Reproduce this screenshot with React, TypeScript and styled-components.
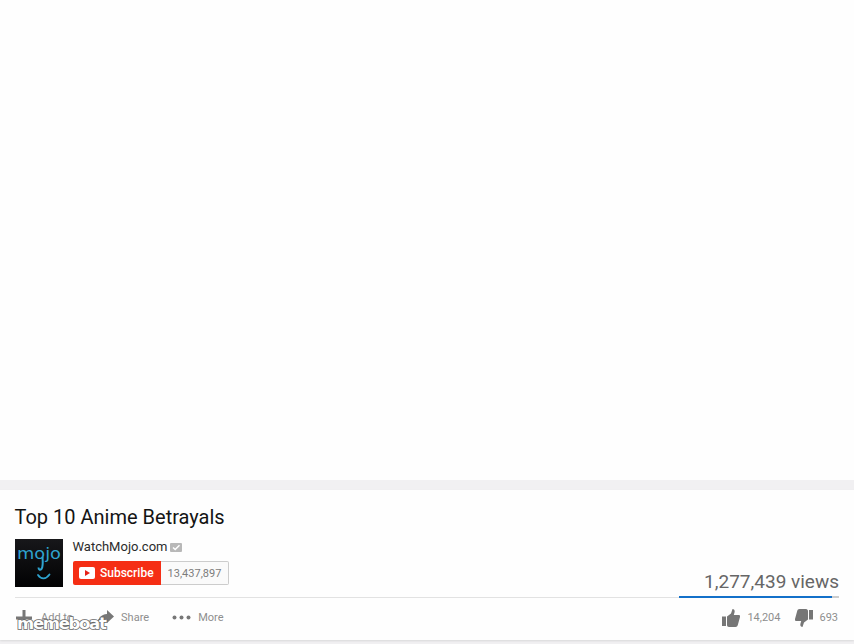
import styled, { createGlobalStyle } from "styled-components";

const GlobalStyle = createGlobalStyle`
  html, body {
    margin: 0;
    padding: 0;
    background: #f1f0f2;
    font-family: Roboto, "Liberation Sans", sans-serif;
  }
`;

const Page = styled.div`
  position: relative;
  width: 854px;
  height: 644px;
  overflow: hidden;
  display: flex;
  flex-direction: column;
  background: #f1f0f2;
`;

const Player = styled.div`
  height: 480px;
  background: #fefefe;
  margin-bottom: 10px;
`;

const Card = styled.section`
  height: 150px;
  box-sizing: border-box;
  padding: 15px 15px 0;
  background: #fefefe;
  box-shadow: 0 1px 2px rgba(0, 0, 0, 0.1);
  display: flex;
  flex-direction: column;
`;

const Title = styled.h1`
  margin: 0 0 0 -0.5px;
  font-size: 20px;
  line-height: 25px;
  font-weight: 400;
  color: #141414;
`;

const Header = styled.div`
  display: flex;
  justify-content: space-between;
  align-items: flex-end;
  margin-top: 9px;
  height: 59px;
  box-sizing: border-box;
  padding-bottom: 10px;
  border-bottom: 1px solid #e2e2e2;
  position: relative;
`;

const Channel = styled.div`
  display: flex;
  gap: 10px;
`;

const Avatar = styled.svg`
  display: block;
  width: 48px;
  height: 48px;
`;

const ChannelInfo = styled.div`
  display: flex;
  flex-direction: column;
  gap: 6px;
`;

const ChannelName = styled.div`
  display: flex;
  align-items: center;
  gap: 3px;
  margin-left: -0.5px;
  font-size: 13px;
  line-height: 16px;
  color: #2b2b2b;
`;

const Subscribe = styled.div`
  display: flex;
  height: 24px;
`;

const SubscribeButton = styled.div`
  width: 88px;
  display: flex;
  align-items: center;
  gap: 5px;
  box-sizing: border-box;
  padding-left: 6px;
  background: #f52e14;
  border-radius: 2px 0 0 2px;
  color: #fff;
  font-size: 12px;
  font-weight: 500;
`;

const SubscriberCount = styled.div`
  width: 68px;
  box-sizing: border-box;
  display: flex;
  align-items: center;
  justify-content: center;
  border: 1px solid #ccc;
  border-left: 0;
  border-radius: 0 2px 2px 0;
  background: #fafafa;
  color: #7c7c7c;
  font-size: 11px;
`;

const Views = styled.div`
  font-size: 19px;
  line-height: 22px;
  color: #666;
  margin-bottom: -6px;
`;

const SentimentBar = styled.div`
  position: absolute;
  right: 0;
  bottom: -1px;
  width: 160px;
  height: 2px;
  background: #ccc;
`;

const SentimentFill = styled.div`
  height: 100%;
  background: #1370c9;
`;

const Actions = styled.div`
  flex: 1;
  display: flex;
  justify-content: space-between;
  align-items: center;
  padding-bottom: 3px;
`;

const ActionGroup = styled.div<{ $gap: number }>`
  display: flex;
  align-items: center;
  gap: ${(p) => p.$gap}px;
`;

const RatingGroup = styled(ActionGroup)`
  padding-right: 1px;
`;

const Action = styled.div<{ $gap: number }>`
  display: flex;
  align-items: center;
  gap: ${(p) => p.$gap}px;
  font-size: 11px;
  color: #8e8e8e;
`;

const Watermark = styled.div`
  position: absolute;
  left: 17px;
  top: 615px;
  font-family: "DejaVu Sans", sans-serif;
  font-size: 16.5px;
  line-height: 18px;
  font-weight: 700;
  letter-spacing: -1.3px;
  color: #fff;
  -webkit-text-stroke: 1.6px #666;
  paint-order: stroke fill;
  opacity: 0.98;
`;

function MojoLogo() {
  return (
    <Avatar viewBox="0 0 48 48">
      <defs>
        <linearGradient id="mojoBg" x1="0" y1="0" x2="0" y2="1">
          <stop offset="0" stopColor="#17171a" />
          <stop offset="1" stopColor="#020203" />
        </linearGradient>
      </defs>
      <rect width="48" height="48" fill="url(#mojoBg)" />
      <text
        x="2"
        y="20"
        fill="#2ea3cf"
        fontFamily="'DejaVu Sans', sans-serif"
        fontSize="15"
        textLength="44"
        lengthAdjust="spacingAndGlyphs"
      >
        mojo
      </text>
      <path d="M27.500 18 C28 24 28 28 26.500 30 C25 31.500 23.500 30.500 23.500 28.500" stroke="#2ea3cf" strokeWidth="2" fill="none" />
      <path d="M23 36 C26 40.500 31 40.500 34.500 35.500" stroke="#2ea3cf" strokeWidth="1.800" fill="none" strokeLinecap="round" />
    </Avatar>
  );
}

function Verified() {
  return (
    <svg width="12" height="9" viewBox="0 0 12 9">
      <rect width="12" height="9" rx="1" fill="#b8b8b8" />
      <path d="M3 4.500 L5.200 6.500 L9.500 2.300" stroke="#fff" strokeWidth="1.500" fill="none" />
    </svg>
  );
}

function YoutubeMark() {
  return (
    <svg width="16" height="12" viewBox="0 0 16 12">
      <rect width="16" height="12" rx="2" fill="#fff" />
      <path d="M6 3 L11 6 L6 9 Z" fill="#e62117" />
    </svg>
  );
}

function PlusIcon() {
  return (
    <svg width="18" height="18" viewBox="0 0 18 18">
      <path d="M7.500 1 H10.500 V7.500 H17 V10.500 H10.500 V17 H7.500 V10.500 H1 V7.500 H7.500 Z" fill="#777" />
    </svg>
  );
}

function ShareIcon() {
  return (
    <svg width="18" height="16" viewBox="0 0 18 16">
      <path d="M11 0 L18 6.500 L11 13 V9 C6 9 3 11 1 15 C1.500 9 5 4.500 11 4 Z" fill="#777" />
    </svg>
  );
}

function MoreIcon() {
  return (
    <svg width="19" height="5" viewBox="0 0 19 5">
      <circle cx="2.500" cy="2.500" r="2" fill="#777" />
      <circle cx="9.500" cy="2.500" r="2" fill="#777" />
      <circle cx="16.500" cy="2.500" r="2" fill="#777" />
    </svg>
  );
}

function ThumbUp() {
  return (
    <svg width="18" height="18" viewBox="0 0 18 18">
      <path d="M0 7.500 H4 V17 H0 Z M5 7.500 L9 4.500 L10.500 0 C12.500 0 13 1.800 12.500 3.500 L11.800 6 H17 C18 6 18.300 7 18 8 L15.800 16 C15.500 17.200 14.800 18 13.500 18 H7 C5.800 18 5 17 5 16 Z" fill="#767676" />
    </svg>
  );
}

function ThumbDown() {
  return (
    <svg width="18" height="18" viewBox="0 0 18 18">
      <path d="M14 1 H18 V10.500 H14 Z M13 10.500 L9 13.500 L7.500 18 C5.500 18 5 16.200 5.500 14.500 L6.200 12 H1 C0 12 -0.300 11 0 10 L2.200 2 C2.500 0.800 3.200 0 4.500 0 H11 C12.200 0 13 1 13 2 Z" fill="#767676" />
    </svg>
  );
}

export default function App() {
  return (
    <Page>
      <GlobalStyle />
      <Player />
      <Card>
        <Title>Top 10 Anime Betrayals</Title>
        <Header>
          <Channel>
            <MojoLogo />
            <ChannelInfo>
              <ChannelName>
                WatchMojo.com <Verified />
              </ChannelName>
              <Subscribe>
                <SubscribeButton>
                  <YoutubeMark />
                  Subscribe
                </SubscribeButton>
                <SubscriberCount>13,437,897</SubscriberCount>
              </Subscribe>
            </ChannelInfo>
          </Channel>
          <Views>1,277,439 views</Views>
          <SentimentBar>
            <SentimentFill style={{ width: `${(14204 / (14204 + 693)) * 100}%` }} />
          </SentimentBar>
        </Header>
        <Actions>
          <ActionGroup $gap={23}>
            <Action $gap={8}>
              <PlusIcon />
              Add to
            </Action>
            <Action $gap={7}>
              <ShareIcon />
              Share
            </Action>
            <Action $gap={7}>
              <MoreIcon />
              More
            </Action>
          </ActionGroup>
          <RatingGroup $gap={15}>
            <Action $gap={7}>
              <ThumbUp />
              14,204
            </Action>
            <Action $gap={6}>
              <ThumbDown />
              693
            </Action>
          </RatingGroup>
        </Actions>
      </Card>
      <Watermark>memeboat</Watermark>
    </Page>
  );
}
